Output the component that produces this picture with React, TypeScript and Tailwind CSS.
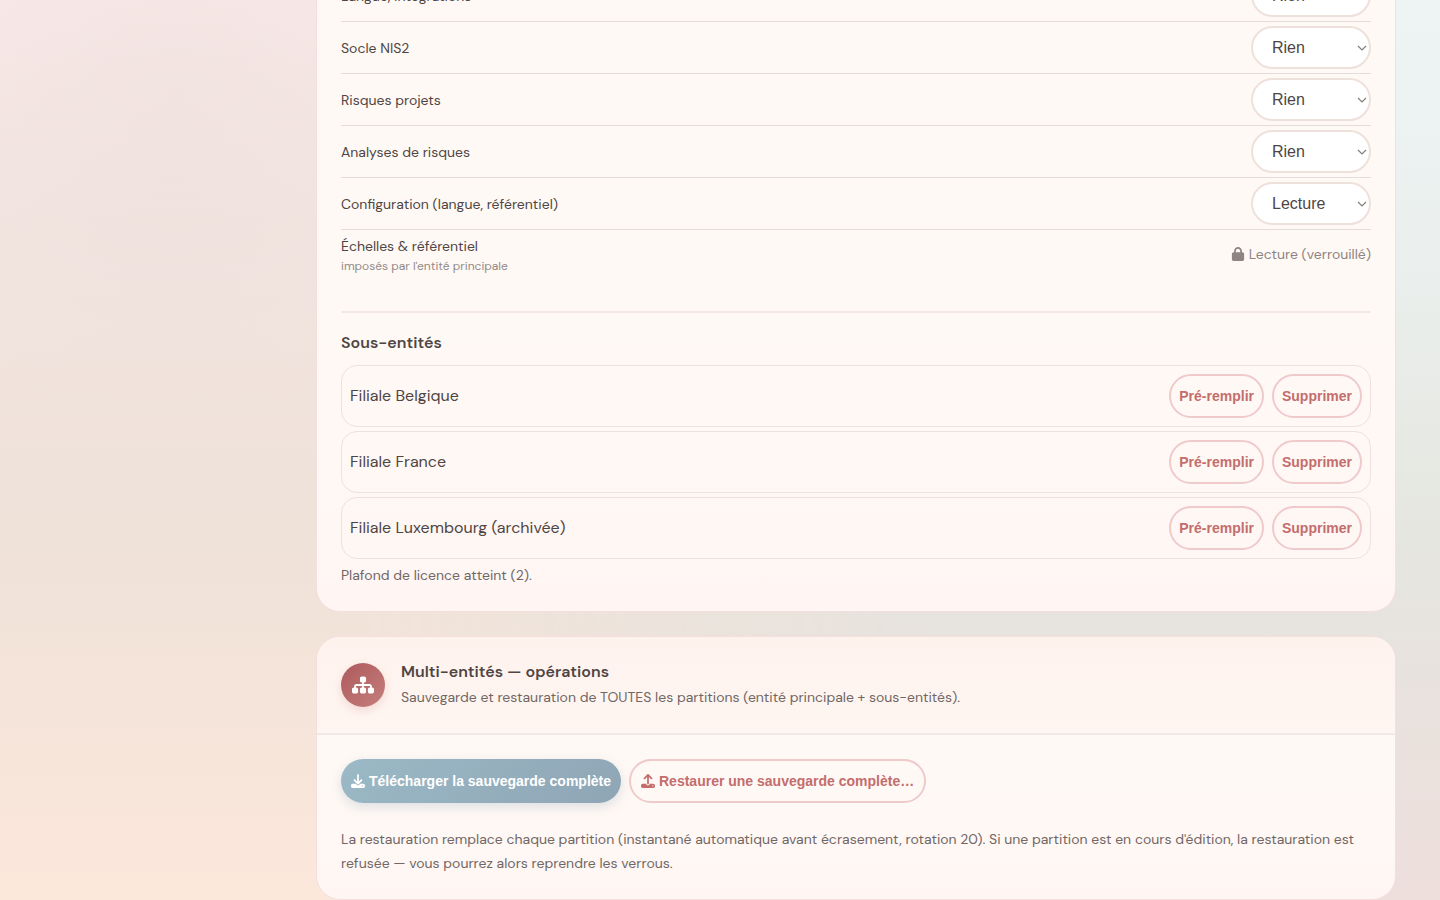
import React, { useState } from 'react';
import { FaDownload, FaLock, FaSitemap, FaUpload } from 'react-icons/fa6';

const RIGHTS = ['Rien', 'Lecture', 'Écriture'];

const MODULES = [
    { id: 'langue', label: 'Langue, intégrations', value: 'Rien' },
    { id: 'nis2', label: 'Socle NIS2', value: 'Rien' },
    { id: 'projets', label: 'Risques projets', value: 'Rien' },
    { id: 'analyses', label: 'Analyses de risques', value: 'Rien' },
    { id: 'config', label: 'Configuration (langue, référentiel)', value: 'Lecture' },
];

const ENTITIES = ['Filiale Belgique', 'Filiale France', 'Filiale Luxembourg (archivée)'];

const outlineButton = 'flex h-11 items-center gap-1 rounded-[22px] border-2 border-[#eecbca] font-["Liberation_Sans",Arial,sans-serif] text-sm font-bold whitespace-nowrap text-[#c36d6d]';

const RightRow: React.FC<{ id: string; label: string; value: string }> = ({ id, label, value }) => {
    const [right, setRight] = useState(value);

    return (
        <div className="flex h-[52px] items-center justify-between border-b border-[#e4dcd8]">
            <label htmlFor={id} className="text-sm">{label}</label>
            <div className="relative">
                <select
                    id={id}
                    value={right}
                    onChange={(e) => setRight(e.target.value)}
                    className="h-[43px] w-[120px] appearance-none rounded-[22px] border-2 border-[#eee1dc] bg-white px-[19px] font-['Liberation_Sans',Arial,sans-serif] text-base"
                >
                    {RIGHTS.map((r) => <option key={r}>{r}</option>)}
                </select>
                <svg className="pointer-events-none absolute top-1/2 right-1 -translate-y-1/2" width="10" height="6" viewBox="0 0 10 6" fill="none" stroke="#857d7b" strokeWidth="1.2">
                    <path d="M1 1l4 4 4-4" />
                </svg>
            </div>
        </div>
    );
};

const EntityRow: React.FC<{ name: string }> = ({ name }) => (
    <li className="flex items-center gap-2 rounded-2xl border border-[#efe1de] p-2">
        <span className="flex-1 text-base">{name}</span>
        <button type="button" className={`${outlineButton} px-2`}>Pré-remplir</button>
        <button type="button" className={`${outlineButton} px-2`}>Supprimer</button>
    </li>
);

const App: React.FC = () => {
    return (
        <div className="relative isolate flex h-screen flex-col justify-end overflow-hidden bg-[linear-gradient(180deg,#eef4f4_0%,#ebf0ef_25%,#e5e6df_60%,#e8e2dd_75%,#eedfdc_100%)] pr-11 pl-[316px] font-['DM_Sans',Inter,sans-serif] text-[#4e4544] before:absolute before:inset-0 before:-z-10 before:bg-[radial-gradient(circle_at_175px_100px,#eadcd866_0%,transparent_320px),linear-gradient(180deg,#f9eae9_0%,#f2e4df_25%,#efe2d9_60%,#fce7db_100%)] before:mask-[linear-gradient(90deg,#000_25%,transparent_65%)]">
            <main className="flex flex-col gap-6">
                <section className="rounded-3xl border border-[#f4dfdd] bg-linear-to-b from-[#fff9f5] from-60% to-[#fff6f4] p-6">
                    {MODULES.map((m) => <RightRow key={m.id} {...m} />)}
                    <div className="flex items-center justify-between pt-1">
                        <div>
                            <p className="text-sm leading-6">Échelles &amp; référentiel</p>
                            <p className="text-xs leading-4 text-[#938a87]">imposés par l'entité principale</p>
                        </div>
                        <p className="flex items-center gap-1 text-sm text-[#8e8481]"><FaLock size={14} />Lecture (verrouillé)</p>
                    </div>

                    <div className="mt-[37px] border-t-2 border-[#f4e9e5] pt-4">
                        <h3 className="mb-2 text-base leading-7 font-semibold">Sous-entités</h3>
                        <ul className="flex flex-col gap-1">
                            {ENTITIES.map((name) => <EntityRow key={name} name={name} />)}
                        </ul>
                        <p className="mt-1 text-sm leading-6 text-[#716765]">Plafond de licence atteint (2).</p>
                    </div>
                </section>

                <section className="overflow-hidden rounded-3xl border border-[#f4dfdd] bg-linear-to-b from-[#fff9f5] from-60% to-[#fff6f4]">
                    <header className="flex items-center gap-4 border-b-2 border-[#f2e8e5] bg-linear-to-b from-[#fef2ed] to-[#fff6f1] p-6">
                        <div className="flex size-11 items-center justify-center rounded-full bg-linear-to-br from-[#ae5a5d] to-[#c47e7c] text-white shadow-[0_4px_10px_#c36d6d33]">
                            <FaSitemap size={22} />
                        </div>
                        <div>
                            <h2 className="mb-0.5 text-base leading-[22px] font-semibold">Multi-entités — opérations</h2>
                            <p className="text-sm leading-6 text-[#716765]">Sauvegarde et restauration de TOUTES les partitions (entité principale + sous-entités).</p>
                        </div>
                    </header>
                    <div className="p-6">
                        <div className="flex gap-2">
                            <button type="button" className="flex h-11 items-center gap-1 rounded-[22px] bg-[linear-gradient(135deg,#9bb9c6,#8fa5b5)] px-2.5 font-['Liberation_Sans',Arial,sans-serif] text-sm font-bold whitespace-nowrap text-white shadow-[0_4px_12px_#8fa5b54d]">
                                <FaDownload size={14} />Télécharger la sauvegarde complète
                            </button>
                            <button type="button" className={`${outlineButton} px-2.5`}>
                                <FaUpload size={14} />Restaurer une sauvegarde complète…
                            </button>
                        </div>
                        <p className="mt-6 text-sm leading-6 text-[#716765]">
                            La restauration remplace chaque partition (instantané automatique avant écrasement, rotation 20). Si une partition est en cours d'édition, la restauration est refusée — vous pourrez alors reprendre les verrous.
                        </p>
                    </div>
                </section>
            </main>
        </div>
    );
};

export default App;
